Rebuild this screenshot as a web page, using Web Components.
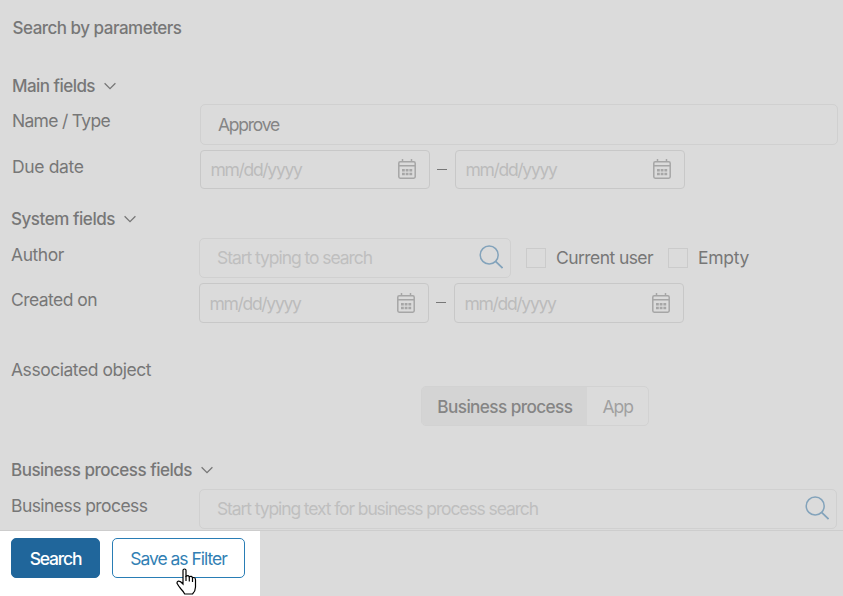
<!DOCTYPE html>
<html lang="en"><head><meta charset="utf-8"><title>Search by parameters</title>
<style>
html,body{margin:0;height:100%;overflow:hidden;background:#dbdbdb}
body{font:17.5px/20px Inter,"Liberation Sans",sans-serif;color:#777}
</style></head><body>
<search-panel></search-panel>
<script>
const define=(name,html,init)=>customElements.define(name,class extends HTMLElement{
  connectedCallback(){
    if(this.shadowRoot)return;
    const t=document.createElement('template');t.innerHTML=html;
    this.attachShadow({mode:'open'}).append(t.content.cloneNode(true));
    if(init)init.call(this,this.shadowRoot);
  }
});
// Text run whose tracking is adjusted so that it spans the width in the "w" attribute.
define('fit-text',`<style>:host{display:block;white-space:nowrap;flex:none}span{display:inline-block}</style><span><slot></slot></span>`,function(root){
  const s=root.querySelector('span'),text=this.textContent,w=+this.getAttribute('w');
  s.style.letterSpacing=((w-s.getBoundingClientRect().width)/text.length)+'px';
});
define('icon-calendar',`<style>:host{display:block;width:18px;height:20px;flex:none}svg{display:block}</style>
<svg width="18" height="20" fill="none" stroke="#a6a6a6" stroke-width="1.5"><rect x=".8" y="2.8" width="16.4" height="16.4" rx="1.4"/><path d="M1 6.7h16M4.5 0v3M13.5 0v3"/><path stroke="none" fill="#a6a6a6" d="M4 10h2.8v2.4H4zM7.7 10h2.8v2.4H7.7zM11.4 10h2.8v2.4h-2.8zM4 13.8h2.8v2.4H4zM7.7 13.8h2.8v2.4H7.7zM11.4 13.8h2.8v2.4h-2.8z"/></svg>`);
define('icon-search',`<style>:host{display:block;width:24px;height:24px;flex:none}svg{display:block}</style>
<svg width="24" height="24" fill="none" stroke="#83a3bb" stroke-width="1.5"><circle cx="10.2" cy="10" r="9"/><path d="M16.6 16.4l7 6.6" stroke-width="1.8"/></svg>`);
define('section-head',`<style>:host{display:flex;align-items:center;gap:9px;height:20px;font-weight:500;font-size:17px;color:#777}svg{display:block}</style>
<slot></slot><svg width="12" height="8" fill="none" stroke="#777" stroke-width="1.3"><path d="M.6 1.2L6 6.6l5.4-5.4"/></svg>`);
define('form-row',`<style>:host{display:grid;grid-template-columns:var(--label,188px) 1fr;align-items:start}
.l{padding-top:7px}.c{display:flex;align-items:center}</style><div class="l"><slot name="label"></slot></div><div class="c"><slot></slot></div>`);
define('text-field',`<style>:host{box-sizing:border-box;display:flex;align-items:center;justify-content:space-between;border:1px solid #d0d0d0;border-radius:5px;padding:0 7px 1px 17px;color:#bfbfbf}
:host([filled]){color:#858585;padding:1px 7px 0 17px}icon-search{margin-top:-1px}</style><slot></slot>`,function(root){
  if(this.hasAttribute('search'))root.append(document.createElement('icon-search'));
});
define('date-field',`<style>:host{box-sizing:border-box;display:flex;align-items:center;justify-content:space-between;width:230px;border:1px solid #c8c8c8;border-radius:4px;padding:1px 13px 0 9.5px;color:#bcbcbc}icon-calendar{margin-top:-1.5px}</style>
<fit-text w="91">mm/dd/yyyy</fit-text><icon-calendar></icon-calendar>`);
define('date-range',`<style>:host{display:flex;align-items:center;height:var(--h,39px)}date-field{height:100%}i{width:10px;height:1px;background:#777;margin:-1px 8px 0 7px}</style>
<date-field></date-field><i></i><date-field></date-field>`);
define('check-box',`<style>:host{display:flex;align-items:center;gap:10px}b{box-sizing:border-box;width:20px;height:20px;border:1px solid #cbcbcb}</style><b></b><slot></slot>`);
define('toggle-group',`<style>:host{box-sizing:border-box;display:flex;width:228px;height:40px;border:1px solid #d2d2d2;border-radius:5px;overflow:hidden}
div{display:flex;align-items:center;padding:1px 0 0 15px}.on{box-sizing:border-box;width:165px;background:#d4d4d4;color:#858585;font-weight:500;font-size:17.2px;padding-left:15.3px}.off{color:#a0a0a0;padding-left:15.5px}</style>
<div class="on"><fit-text w="135">Business process</fit-text></div><div class="off"><fit-text w="30.5">App</fit-text></div>`);
define('ui-button',`<style>:host{box-sizing:border-box;display:flex;justify-content:center;align-items:center;height:40px;width:133px;border:1px solid #297db5;border-radius:5px;color:#327fb4;background:#fff;padding-top:1px}
:host([primary]){width:89px;color:#fff;background:#20669b;border-color:#20669b;font-weight:500}</style><slot></slot>`);
define('hand-cursor',`<style>:host{display:block;width:21px;height:28px}svg{display:block}</style>
<svg width="21" height="28"><path d="M7 2.2Q7 1 8.5 1T10 2.2V8.2Q12.5 6.8 13.2 8.7Q15.8 7.7 16.4 9.6Q19.5 9 19.5 12V19Q19.5 23 16.5 26H8.7Q7 23 5 21Q2.5 18 1 15.2Q1 13 3 13.2Q4.5 13.3 7 16Z" fill="#fff" stroke="#000" stroke-width="1.2"/><path d="M10 8v5M13.3 8.7v4.8M16.5 9.6v4.5" stroke="#000" stroke-width="1.2"/></svg>`);
define('search-panel',`<style>
:host{display:flex;flex-direction:column;box-sizing:border-box;width:843px;height:596px;padding-top:18px}
.form{height:512px;padding-left:12px;box-sizing:border-box}
.title{font-weight:500;font-size:17px;height:20px;padding-left:.5px}
.g1{margin-top:38px}.g1 form-row:nth-of-type(1){margin-top:8px}.g1 form-row:nth-of-type(2){margin-top:5px}
.rest{margin-left:-1px}.rest form-row.created{--h:40px}
.toggle{margin:6px 0 0 410px}
footer{box-sizing:border-box;height:66px;border-top:1px solid #cdcdcd;display:flex;align-items:stretch}
.actions{position:relative;box-sizing:border-box;width:260px;height:65px;background:#fff;padding:7px 0 0 11px;display:flex;gap:12px}
hand-cursor{position:absolute;left:176px;top:37px}
</style>
<div class="form">
<div class="title"><fit-text w="169">Search by parameters</fit-text></div>
<div class="g1">
<section-head><fit-text w="83">Main fields</fit-text></section-head>
<form-row><fit-text slot="label" w="98">Name / Type</fit-text><text-field filled style="width:638px;height:41px"><fit-text w="61">Approve</fit-text></text-field></form-row>
<form-row><fit-text slot="label" w="71.5">Due date</fit-text><date-range></date-range></form-row>
</div>
<div class="rest">
<section-head style="margin-top:20px"><fit-text w="104">System fields</fit-text></section-head>
<form-row style="margin-top:9px"><fit-text slot="label" w="53">Author</fit-text><text-field search style="width:312px;height:40px"><fit-text w="155">Start typing to search</fit-text></text-field><check-box style="margin-left:15px"><fit-text w="97">Current user</fit-text></check-box><check-box style="margin-left:15px"><fit-text w="51">Empty</fit-text></check-box></form-row>
<form-row class="created" style="margin-top:5px"><fit-text slot="label" w="86">Created on</fit-text><date-range></date-range></form-row>
<fit-text w="140" style="margin-top:37px">Associated object</fit-text>
<toggle-group class="toggle"></toggle-group>
<section-head style="margin-top:34px"><fit-text w="181">Business process fields</fit-text></section-head>
<form-row style="margin-top:9px"><fit-text slot="label" w="136.5">Business process</fit-text><text-field search style="width:638px;height:40px"><fit-text w="321">Start typing text for business process search</fit-text></text-field></form-row>
</div></div>
<footer><div class="actions"><ui-button primary><fit-text w="51.5">Search</fit-text></ui-button><ui-button><fit-text w="96.5">Save as Filter</fit-text></ui-button><hand-cursor></hand-cursor></div></footer>`);
</script></body></html>
